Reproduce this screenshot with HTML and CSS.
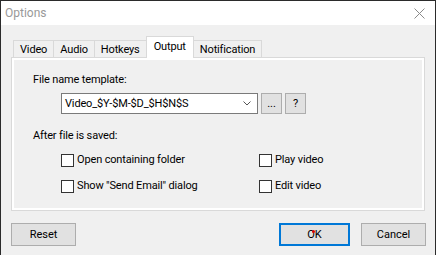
FILE: index.html
```html
<!DOCTYPE html>
<html>
<head>
    <title>Options</title>
    <link rel="stylesheet" href="styles.css">
</head>
<body>
    <div class="window">
        <div class="titlebar">
            <span class="title">Options</span>
            <svg class="close" width="11" height="11" viewBox="0 0 11 11">
                <path d="M0.5 0.5 L10.5 10.5 M10.5 0.5 L0.5 10.5" stroke="#8a8a8a" stroke-width="1" fill="none"/>
            </svg>
        </div>
        <div class="dialog">
            <div class="tabs">
                <div class="tab">Video</div>
                <div class="tab">Audio</div>
                <div class="tab">Hotkeys</div>
                <div class="tab selected">Output</div>
                <div class="tab">Notification</div>
            </div>
            <div class="pane">
                <div class="page">
                    <div class="label">File name template:</div>
                    <div class="template-row">
                        <div class="combo">
                            <span>Video_$Y-$M-$D_$H$N$S</span>
                            <svg width="8" height="5" viewBox="0 0 8 5">
                                <path d="M0.5 0.5 L4 4 L7.5 0.5" stroke="#555" stroke-width="1" fill="none"/>
                            </svg>
                        </div>
                        <button class="small-btn">...</button>
                        <button class="small-btn">?</button>
                    </div>
                    <div class="label after">After file is saved:</div>
                    <div class="checks">
                        <label class="check"><span class="box"></span>Open containing folder</label>
                        <label class="check"><span class="box"></span>Play video</label>
                        <label class="check"><span class="box"></span>Show "Send Email" dialog</label>
                        <label class="check"><span class="box"></span>Edit video</label>
                    </div>
                </div>
            </div>
            <div class="footer">
                <button class="btn">Reset</button>
                <div class="right-buttons">
                    <button class="btn default">OK<span class="dot"></span></button>
                    <button class="btn">Cancel</button>
                </div>
            </div>
        </div>
    </div>
</body>
</html>
```

FILE: styles.css
```css
body {
    margin: 0;
    background-color: #f0f0f0;
    font-family: Roboto, "Liberation Sans", Arial, sans-serif;
    font-size: 11px;
    letter-spacing: -0.15px;
    color: #000;
}

.window {
    width: 434px;
    height: 254px;
    border: 1px solid #2b2b2b;
    border-bottom: none;
    background-color: #f0f0f0;
}

.titlebar {
    height: 24px;
    background-color: #fff;
    display: flex;
    align-items: center;
    justify-content: space-between;
    padding: 0 10px 0 4px;
}

.title {
    color: #999;
    font-size: 12px;
    letter-spacing: 0;
}

.close {
    margin-top: 1px;
}

.dialog {
    padding: 12px 0 0 10px;
}

.tabs {
    display: flex;
    align-items: flex-end;
    padding-left: 2px;
    height: 20px;
}

.tab {
    height: 16px;
    line-height: 17px;
    padding: 0 6px;
    border: 1px solid #d9d9d9;
    border-bottom: none;
    margin-right: -1px;
    background-color: #f0f0f0;
}

.tab.selected {
    line-height: 19px;
    background-color: #fff;
    position: relative;
    z-index: 1;
    margin-bottom: -1px;
    padding: 0 7px;
    height: 21px;
}

.pane {
    border: 1px solid #d9d9d9;
    background-color: #fff;
    padding: 2px;
    height: 148px;
    width: 408px;
}

.page {
    background-color: #f0f0f0;
    height: 148px;
    padding: 0 0 0 19px;
    box-sizing: border-box;
}

.label {
    line-height: 16px;
    padding-top: 12px;
}

.label.after {
    padding-top: 14px;
}

.template-row {
    display: flex;
    gap: 3px;
    margin: 5px 0 0 28px;
}

.combo {
    width: 186px;
    height: 19px;
    border: 1px solid #7a7a7a;
    background-color: #fff;
    display: flex;
    align-items: center;
    justify-content: space-between;
    padding: 0 6px 0 3px;
}

.small-btn {
    width: 21px;
    height: 21px;
    border: 1px solid #adadad;
    background-color: #e1e1e1;
    font-family: Roboto, "Liberation Sans", Arial, sans-serif;
    font-size: 11px;
    padding: 0;
    color: #000;
}

.checks {
    display: grid;
    grid-template-columns: 198px auto;
    row-gap: 10px;
    margin: 8px 0 0 28px;
}

.check {
    display: flex;
    align-items: center;
    line-height: 16px;
}

.box {
    width: 11px;
    height: 11px;
    border: 1px solid #333;
    background-color: #fff;
    margin-right: 3px;
}

.footer {
    display: flex;
    justify-content: space-between;
    width: 415px;
    margin-top: 12px;
}

.right-buttons {
    display: flex;
    gap: 11px;
}

.btn {
    width: 65px;
    height: 23px;
    border: 1px solid #adadad;
    background-color: #e1e1e1;
    font-family: Roboto, "Liberation Sans", Arial, sans-serif;
    font-size: 11px;
    color: #000;
    padding: 0;
}

.btn.default {
    width: 71px;
    border: 2px solid #0078d7;
    position: relative;
}

.dot {
    position: absolute;
    left: 31px;
    top: 5px;
    width: 3px;
    height: 3px;
    border-radius: 50%;
    background-color: #e00000;
}
```
